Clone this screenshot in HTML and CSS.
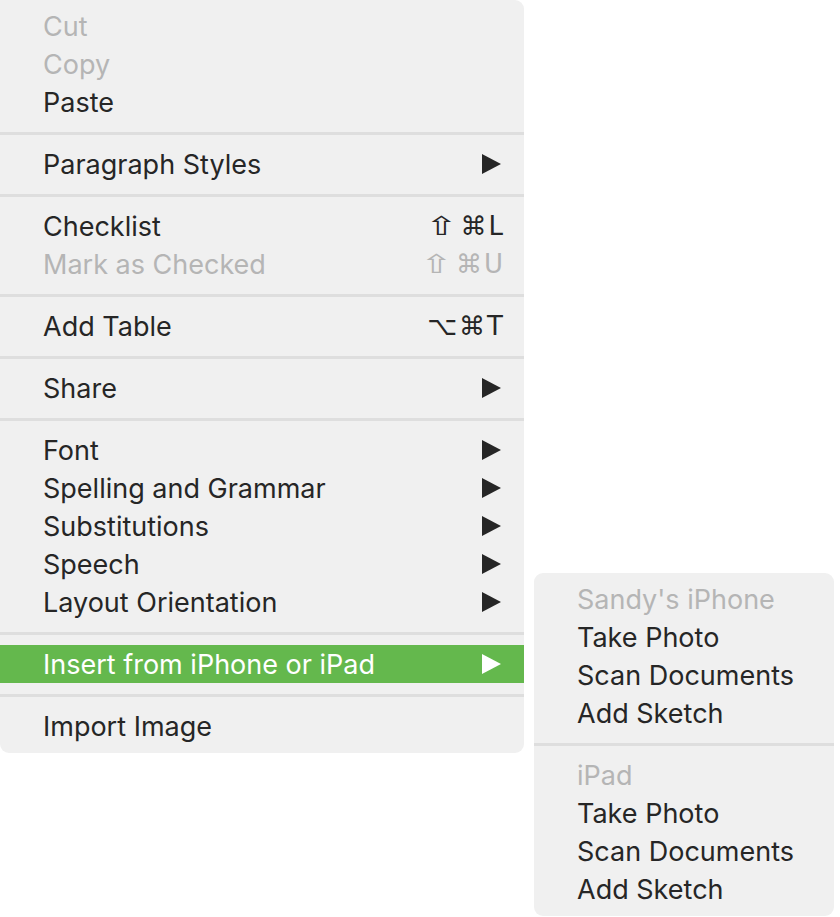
FILE: index.html
```html
<!DOCTYPE html>
<html>
<head>
<meta charset="utf-8">
<link rel="stylesheet" href="styles.css">
</head>
<body>
<div class="stage">
  <div class="menu main">
    <div class="item disabled"><span class="label">Cut</span></div>
    <div class="item disabled"><span class="label">Copy</span></div>
    <div class="item"><span class="label">Paste</span></div>
    <div class="sep"></div>
    <div class="item"><span class="label">Paragraph Styles</span><svg class="arrow" viewBox="0 0 19 20"><polygon points="0,0 19,10 0,20"/></svg></div>
    <div class="sep"></div>
    <div class="item"><span class="label">Checklist</span><span class="key"><span class="shift">⇧</span>⌘L</span></div>
    <div class="item disabled"><span class="label">Mark as Checked</span><span class="key"><span class="shift">⇧</span>⌘U</span></div>
    <div class="sep"></div>
    <div class="item"><span class="label">Add Table</span><span class="key">⌥⌘T</span></div>
    <div class="sep"></div>
    <div class="item"><span class="label">Share</span><svg class="arrow" viewBox="0 0 19 20"><polygon points="0,0 19,10 0,20"/></svg></div>
    <div class="sep"></div>
    <div class="item"><span class="label">Font</span><svg class="arrow" viewBox="0 0 19 20"><polygon points="0,0 19,10 0,20"/></svg></div>
    <div class="item"><span class="label">Spelling and Grammar</span><svg class="arrow" viewBox="0 0 19 20"><polygon points="0,0 19,10 0,20"/></svg></div>
    <div class="item"><span class="label">Substitutions</span><svg class="arrow" viewBox="0 0 19 20"><polygon points="0,0 19,10 0,20"/></svg></div>
    <div class="item"><span class="label">Speech</span><svg class="arrow" viewBox="0 0 19 20"><polygon points="0,0 19,10 0,20"/></svg></div>
    <div class="item"><span class="label">Layout Orientation</span><svg class="arrow" viewBox="0 0 19 20"><polygon points="0,0 19,10 0,20"/></svg></div>
    <div class="sep"></div>
    <div class="item selected"><span class="label">Insert from iPhone or iPad</span><svg class="arrow" viewBox="0 0 19 20"><polygon points="0,0 19,10 0,20"/></svg></div>
    <div class="sep"></div>
    <div class="item"><span class="label">Import Image</span></div>
  </div>
  <div class="menu sub">
    <div class="item disabled"><span class="label">Sandy's iPhone</span></div>
    <div class="item"><span class="label">Take Photo</span></div>
    <div class="item"><span class="label">Scan Documents</span></div>
    <div class="item"><span class="label">Add Sketch</span></div>
    <div class="sep"></div>
    <div class="item disabled"><span class="label">iPad</span></div>
    <div class="item"><span class="label">Take Photo</span></div>
    <div class="item"><span class="label">Scan Documents</span></div>
    <div class="item"><span class="label">Add Sketch</span></div>
  </div>
</div>
</body>
</html>
```

FILE: styles.css
```css
html, body {
  margin: 0;
  padding: 0;
  background: #ffffff;
}
body {
  font-family: Inter, "Liberation Sans", sans-serif;
  font-size: 27px;
  color: #262626;
}
.stage {
  display: flex;
  align-items: flex-start;
  gap: 10px;
}
.menu {
  background: #f0f0f0;
  display: flex;
  flex-direction: column;
  box-sizing: border-box;
}
.main {
  width: 524px;
  padding: 7px 0 8px;
  border-radius: 0 9px 9px 9px;
}
.sub {
  width: 300px;
  margin-top: 573px;
  padding: 7px 0 8px;
  border-radius: 9px;
}
.item {
  height: 38px;
  display: flex;
  align-items: center;
  padding: 0 23px 0 43px;
  white-space: nowrap;
}
.label {
  flex: 1;
}
.disabled {
  color: #b5b5b5;
}
.selected {
  background: #64b84d;
  color: #ffffff;
}
.arrow {
  width: 19px;
  height: 20px;
  fill: #262626;
  flex: none;
}
.selected .arrow {
  fill: #ffffff;
}
.key {
  font-family: "DejaVu Sans", sans-serif;
  font-size: 26px;
  letter-spacing: 2px;
  margin-right: -4px;
  display: flex;
  align-items: center;
}
.shift {
  display: inline-block;
  transform: scaleX(1.5);
  margin: 0 6px 0 4px;
}
.sep {
  height: 24px;
  display: flex;
  align-items: center;
}
.sep::before {
  content: "";
  display: block;
  width: 100%;
  height: 3px;
  background: #dedede;
}
```
